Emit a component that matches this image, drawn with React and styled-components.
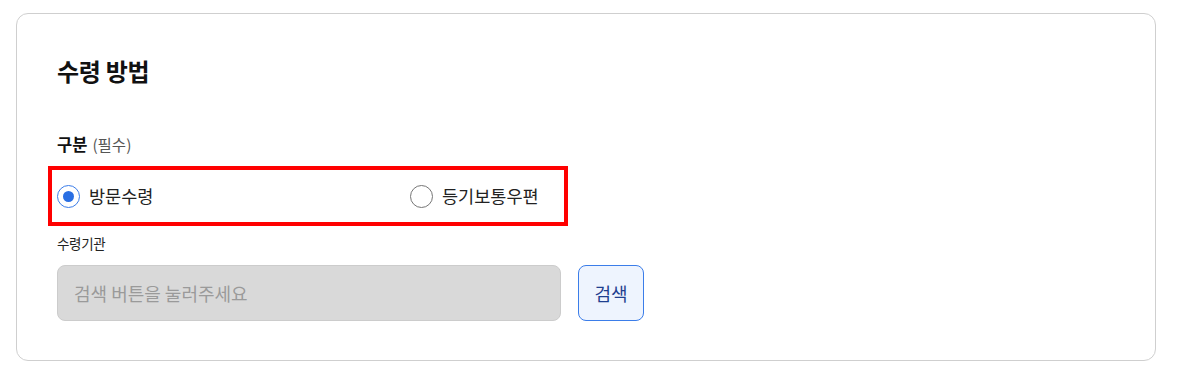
import React from "react";
import styled, { createGlobalStyle } from "styled-components";

const GlobalStyle = createGlobalStyle`
  html, body {
    margin: 0;
    padding: 0;
    background: #fff;
  }
  body {
    font-family: "Noto Sans CJK KR", "Noto Sans", sans-serif;
    color: #111;
  }
`;

const Page = styled.div`
  padding: 13px 22px 8px 16px;
`;

const Card = styled.section`
  box-sizing: border-box;
  width: 1140px;
  border: 1px solid #cfcfcf;
  border-radius: 12px;
  padding: 40px 40px 39px 40px;
`;

const Title = styled.h2`
  margin: 0;
  font-size: 24px;
  line-height: 34px;
  font-weight: 700;
  letter-spacing: -0.3px;
  color: #111;
`;

const FieldLabel = styled.div`
  margin-top: 44px;
  font-size: 16.5px;
  line-height: 24px;
  font-weight: 700;
  color: #111;

  small {
    font-size: 15.5px;
    font-weight: 400;
    color: #555;
    margin-left: 5px;
  }
`;

const RadioGroup = styled.div`
  box-sizing: border-box;
  margin: 10px 0 0 -9px;
  width: 520px;
  height: 60px;
  border: 4px solid #ff0000;
  padding-left: 5px;
  display: grid;
  grid-template-columns: 353px auto;
  align-items: center;
`;

const Option = styled.label`
  display: flex;
  align-items: center;
  gap: 9px;
  font-size: 17.5px;
  line-height: 24px;
  color: #222;
  cursor: pointer;
`;

const Circle = styled.span`
  box-sizing: border-box;
  width: 23px;
  height: 23px;
  border-radius: 50%;
  border: ${(p) => (p.$checked ? "1.5px solid #3b7de9" : "1px solid #767676")};
  background: #fff;
  display: flex;
  align-items: center;
  justify-content: center;

  &::after {
    content: "";
    display: ${(p) => (p.$checked ? "block" : "none")};
    width: 11px;
    height: 11px;
    border-radius: 50%;
    background: #2a6fe3;
  }
`;

const SubLabel = styled.div`
  margin-top: 7px;
  font-size: 13.5px;
  line-height: 20px;
  letter-spacing: -0.3px;
  color: #222;
`;

const SearchRow = styled.div`
  margin-top: 12px;
  display: flex;
  gap: 17px;
`;

const Field = styled.div`
  box-sizing: border-box;
  width: 504px;
  height: 56px;
  border: 1px solid #cccccc;
  border-radius: 8px;
  background: #d9d9d9;
  padding: 0 16px;
  display: flex;
  align-items: center;
  font-size: 18px;
  color: #9a9a9a;
`;

const SearchButton = styled.button`
  box-sizing: border-box;
  width: 66px;
  height: 56px;
  border: 1px solid #3b7de9;
  border-radius: 8px;
  background: #eef4fe;
  font-family: inherit;
  font-size: 18px;
  color: #1f3f8f;
  cursor: pointer;
`;

const options = [
  { label: "방문수령", checked: true },
  { label: "등기보통우편", checked: false },
];

export default function App() {
  return (
    <>
      <GlobalStyle />
      <Page>
        <Card>
          <Title>수령 방법</Title>
          <FieldLabel>
            구분<small>(필수)</small>
          </FieldLabel>
          <RadioGroup>
            {options.map((o) => (
              <Option key={o.label}>
                <Circle $checked={o.checked} />
                {o.label}
              </Option>
            ))}
          </RadioGroup>
          <SubLabel>수령기관</SubLabel>
          <SearchRow>
            <Field>검색 버튼을 눌러주세요</Field>
            <SearchButton>검색</SearchButton>
          </SearchRow>
        </Card>
      </Page>
    </>
  );
}
